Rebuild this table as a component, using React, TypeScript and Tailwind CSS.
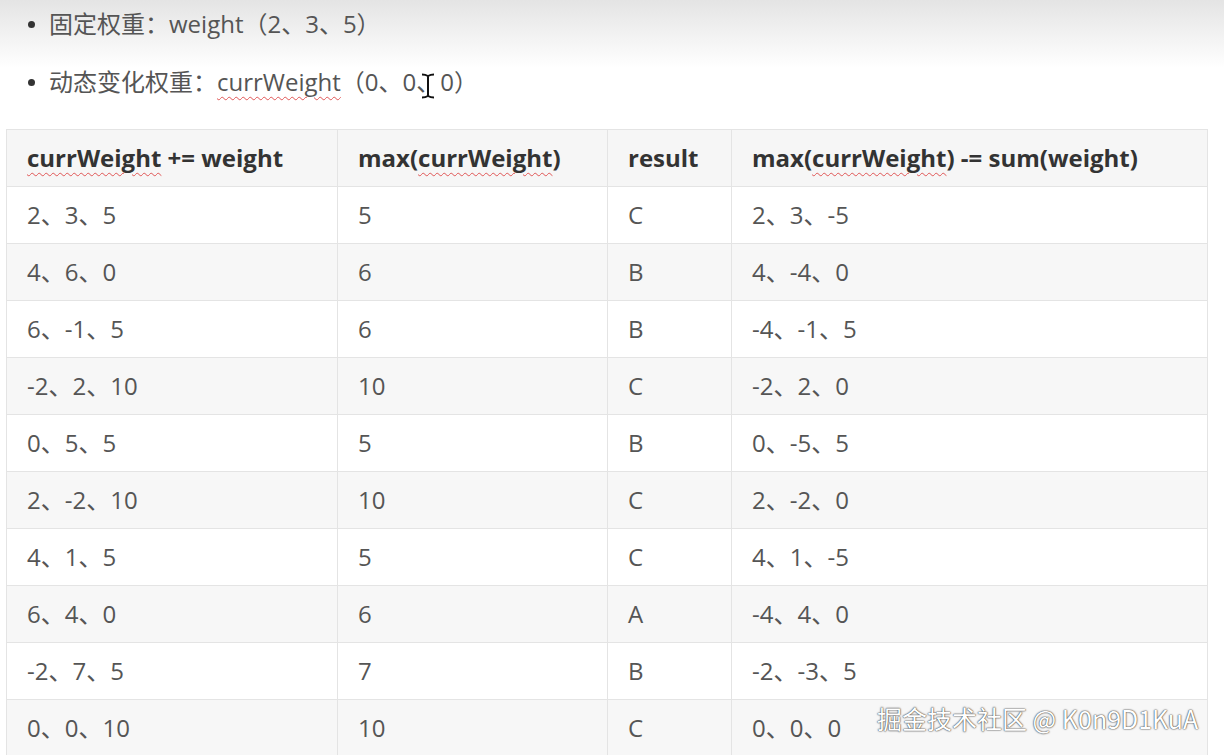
import React from "react";

const rows: string[][] = [
  ["2、3、5", "5", "C", "2、3、-5"],
  ["4、6、0", "6", "B", "4、-4、0"],
  ["6、-1、5", "6", "B", "-4、-1、5"],
  ["-2、2、10", "10", "C", "-2、2、0"],
  ["0、5、5", "5", "B", "0、-5、5"],
  ["2、-2、10", "10", "C", "2、-2、0"],
  ["4、1、5", "5", "C", "4、1、-5"],
  ["6、4、0", "6", "A", "-4、4、0"],
  ["-2、7、5", "7", "B", "-2、-3、5"],
  ["0、0、10", "10", "C", "0、0、0"],
];

// spell-check squiggle like the editor shows
const Squiggle: React.FC<{ children: React.ReactNode }> = ({ children }) => (
  <span className="underline decoration-wavy decoration-[#e05555] decoration-1 underline-offset-[5px]">
    {children}
  </span>
);

const cell = "border border-[#e4e4e4] px-[20px] h-[57px] align-middle";

export default function App() {
  return (
    <div
      className="relative w-[1224px] h-[755px] overflow-hidden bg-gradient-to-b from-[#e4e4e4] via-white via-[9%] to-white text-[#555]"
      style={{ fontFamily: '"Open Sans", "Noto Sans CJK SC", sans-serif' }}
    >
      <ul className="pl-[28px] pt-[5px] text-[24px] leading-[38px]">
        <li className="flex items-center gap-[14px] h-[38px]">
          <span className="w-[7px] h-[7px] rounded-full bg-[#333]" />
          <span>固定权重：weight（2、3、5）</span>
        </li>
        <li className="flex items-center gap-[14px] h-[38px] mt-[20px]">
          <span className="w-[7px] h-[7px] rounded-full bg-[#333]" />
          <span>
            动态变化权重：<Squiggle>currWeight</Squiggle>（0、0
            <span className="relative inline-block w-0 h-[20px]">
              {/* text cursor (I-beam) */}
              <svg
                className="absolute left-[3px] top-[1px]"
                width="18"
                height="28"
                viewBox="0 0 18 28"
              >
                <path d="M3 2.5c2 0 4 .3 6 1.5c2-1.2 4-1.5 6-1.5M9 4v20M3 25.5c2 0 4-.3 6-1.5c2 1.2 4 1.5 6 1.5" stroke="#111" strokeWidth="2" fill="none" />
              </svg>
            </span>
            、0）
          </span>
        </li>
      </ul>

      <table className="absolute left-[6px] top-[129px] w-[1201px] border-collapse table-fixed text-[24px]">
        <colgroup>
          <col className="w-[331px]" />
          <col className="w-[270px]" />
          <col className="w-[124px]" />
          <col className="w-[476px]" />
        </colgroup>
        <thead>
          <tr className="bg-[#f6f6f6] text-[#333] font-bold text-left">
            <th className={cell}>
              <Squiggle>currWeight</Squiggle> += weight
            </th>
            <th className={cell}>
              max(<Squiggle>currWeight</Squiggle>)
            </th>
            <th className={cell}>result</th>
            <th className={cell}>
              max(<Squiggle>currWeight</Squiggle>) -= sum(weight)
            </th>
          </tr>
        </thead>
        <tbody>
          {rows.map((r, i) => (
            <tr key={i} className={i % 2 === 0 ? "bg-white" : "bg-[#f7f7f7]"}>
              {r.map((v, j) => (
                <td key={j} className={cell}>
                  {v}
                </td>
              ))}
            </tr>
          ))}
        </tbody>
      </table>

      <div
        className="absolute left-[877px] top-[702px] text-[25px] leading-[32px] text-white [text-shadow:0_0_2px_#444,0_0_1px_#222]"
        style={{ fontFamily: '"Noto Sans CJK SC", "DejaVu Sans", sans-serif' }}
      >
        掘金技术社区 @ K0n9D1KuA
      </div>
    </div>
  );
}
